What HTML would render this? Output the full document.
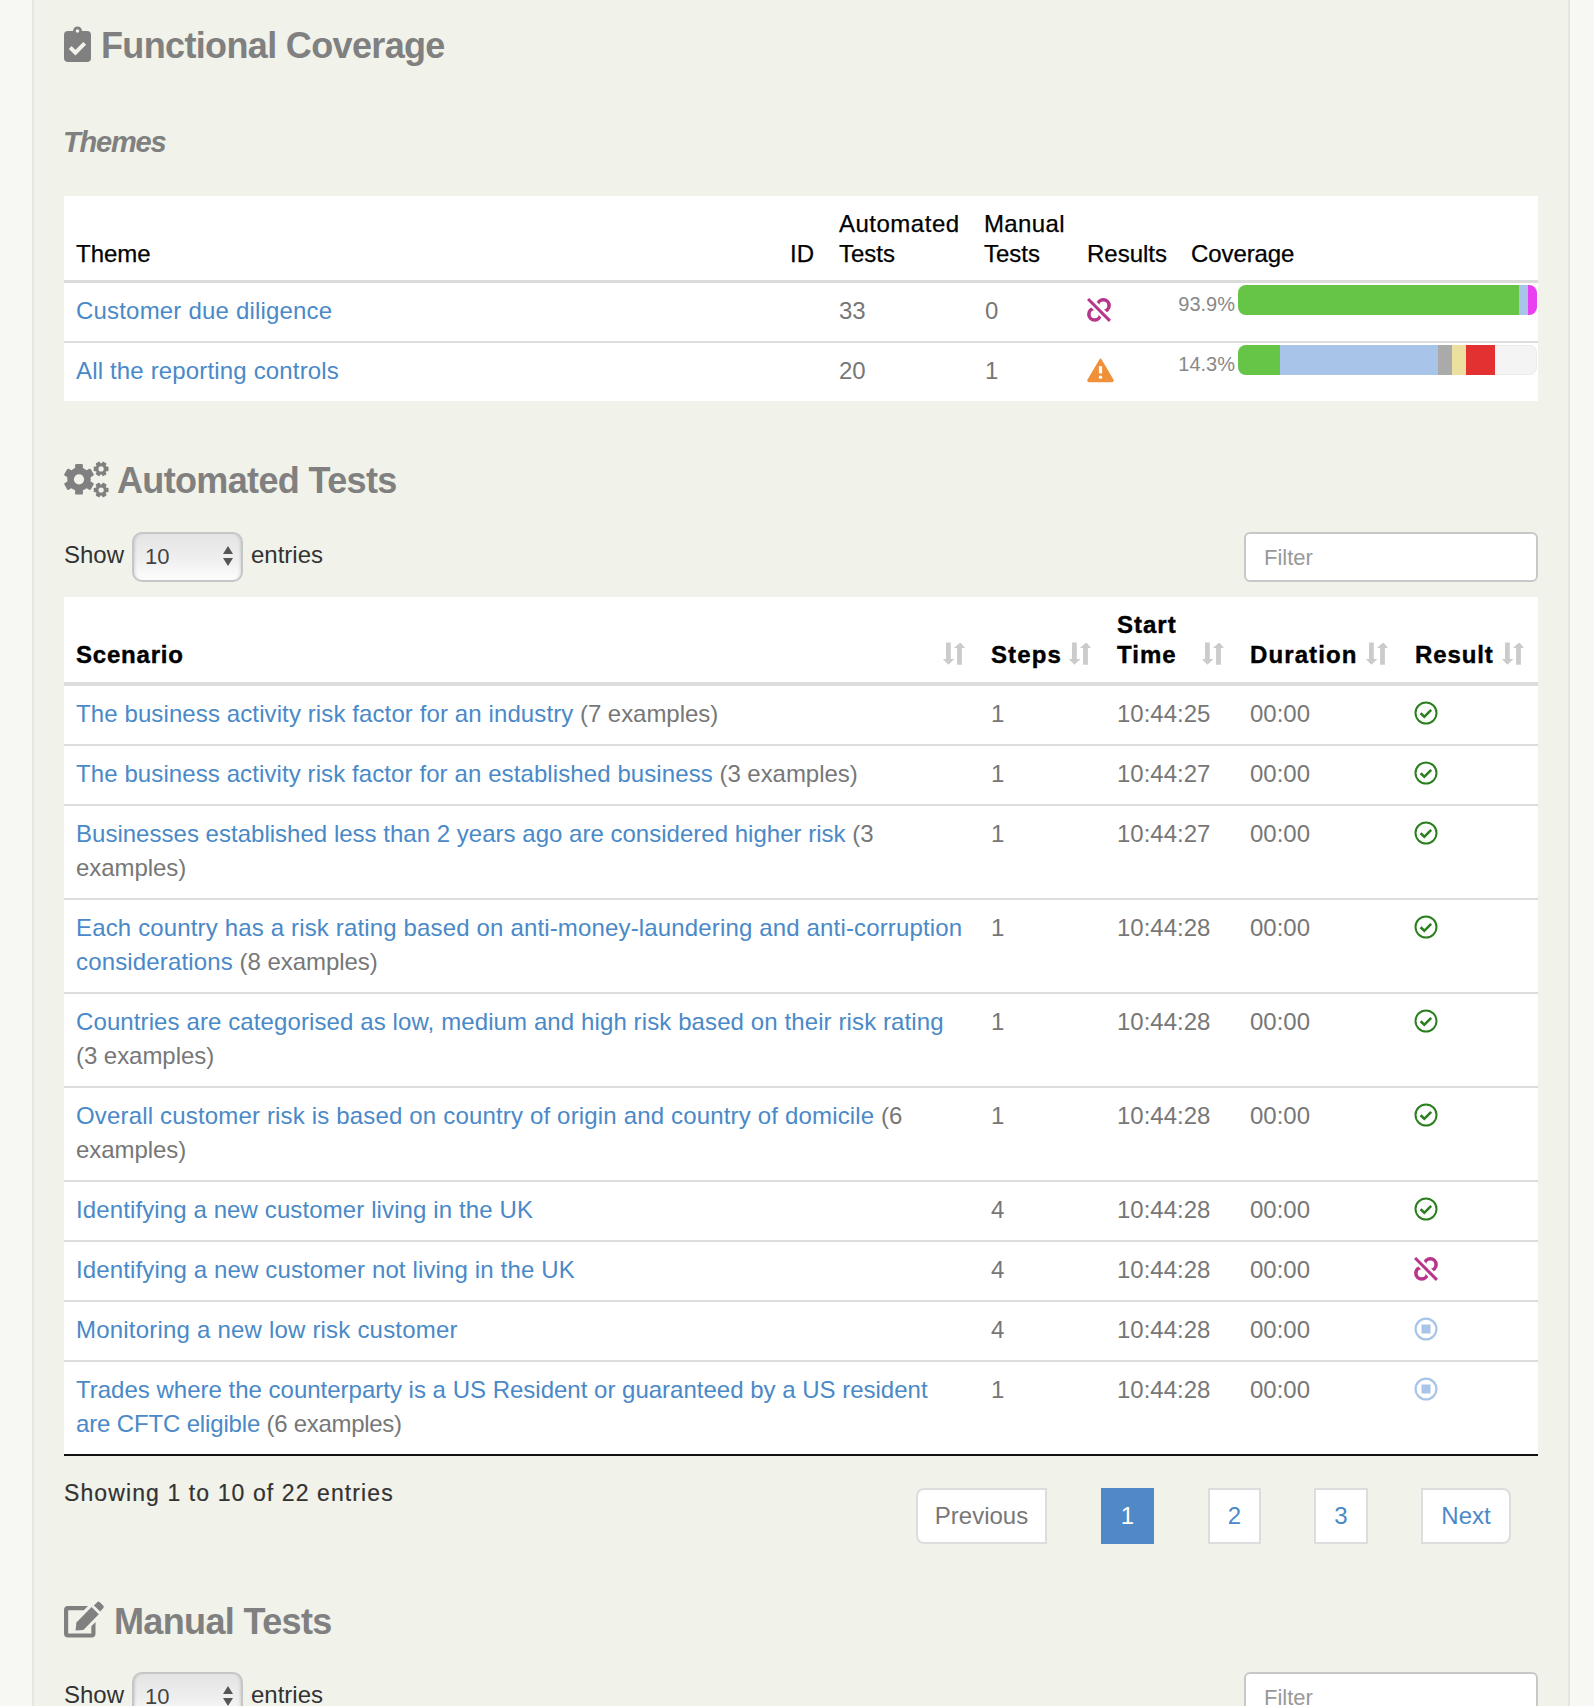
<!DOCTYPE html>
<html><head><meta charset="utf-8">
<style>
*{box-sizing:border-box;margin:0;padding:0}
html,body{width:1594px;height:1706px;overflow:hidden}
body{background:#f7f8f3;font-family:"Liberation Sans",sans-serif;position:relative}
#page{position:absolute;left:32px;top:0;width:1538px;height:1706px;background:#f1f2ea;border-left:2px solid #e5e6e1;border-right:2px solid #e5e6e1}
.abs{position:absolute;white-space:nowrap}
.h2{font-size:36px;font-weight:bold;color:#808080;letter-spacing:-0.65px;line-height:41px}
.themes{font-size:29px;font-weight:bold;font-style:italic;color:#808080;letter-spacing:-1.2px;line-height:32px}
.panel{position:absolute;left:64px;width:1474px;background:#fff}
.th1{font-size:24px;color:#000;line-height:30px;-webkit-text-stroke:0.25px #000}
.td{font-size:24px;line-height:34px;color:#777;letter-spacing:0.12px}
.ex{letter-spacing:-0.05px}
.num{letter-spacing:0}
a{color:#4a89c7;text-decoration:none}
.sep{position:absolute;left:64px;width:1474px;height:2px;background:#ddd}
.th2{font-size:24px;font-weight:bold;color:#000;line-height:30px;letter-spacing:1px;-webkit-text-stroke:0.4px #000}
.show{font-size:24px;color:#333;line-height:27px}
.sel{position:absolute;width:111px;height:50px;border:2px solid #c6c6c6;border-radius:10px;background:linear-gradient(#e4e4e4,#efefef 55%,#fdfdfd);box-shadow:inset 3px 0 3px -2px rgba(0,0,0,0.12),inset -3px 0 3px -2px rgba(0,0,0,0.12)}
.filter{position:absolute;left:1244px;width:294px;height:50px;border:2px solid #c8c8c8;border-radius:6px;background:#fff}
.pg{position:absolute;top:1488px;height:56px;border:2px solid #ddd;background:#fff;font-size:24px;color:#4a89c7;text-align:center;line-height:52px}
</style></head><body>
<div id="page"></div>
<svg class="abs" style="left:60px;top:24px" width="36" height="42" viewBox="0 0 36 42">
<path d="M8,7 H13 A4.5,4.5 0 0 1 22,7 H27 A4,4 0 0 1 31,11 V34 A4,4 0 0 1 27,38 H8 A4,4 0 0 1 4,34 V11 A4,4 0 0 1 8,7 Z" fill="#808080"/>
<circle cx="17.5" cy="7" r="1.8" fill="#f1f2ea"/>
<polyline points="10.2,23.5 15.4,28.6 24.7,19.4" fill="none" stroke="#f1f2ea" stroke-width="4"/>
</svg>
<div class="abs h2" style="left:101px;top:25px">Functional Coverage</div>
<div class="abs themes" style="left:63px;top:126px">Themes</div>
<div class="panel" style="top:196px;height:205px"></div>
<div class="abs th1" style="left:76px;top:239px;letter-spacing:0px">Theme</div>
<div class="abs th1" style="left:790px;top:239px;letter-spacing:0px">ID</div>
<div class="abs th1" style="left:839px;top:209px;letter-spacing:0.5px">Automated</div>
<div class="abs th1" style="left:839px;top:239px;letter-spacing:0px">Tests</div>
<div class="abs th1" style="left:984px;top:209px;letter-spacing:0.35px">Manual</div>
<div class="abs th1" style="left:984px;top:239px;letter-spacing:0px">Tests</div>
<div class="abs th1" style="left:1087px;top:239px;letter-spacing:0px">Results</div>
<div class="abs th1" style="left:1191px;top:239px;letter-spacing:-0.1px">Coverage</div>
<div class="sep" style="top:280px;height:3px;background:#dbdbdb"></div>
<div class="sep" style="top:341px"></div>
<div class="abs td" style="left:76px;top:294px"><a style="letter-spacing:0.19px">Customer due diligence</a></div>
<div class="abs td num" style="left:839px;top:294px">33</div>
<div class="abs td num" style="left:985px;top:294px">0</div>
<div class="abs td" style="left:76px;top:354px"><a style="letter-spacing:0.16px">All the reporting controls</a></div>
<div class="abs td num" style="left:839px;top:354px">20</div>
<div class="abs td num" style="left:985px;top:354px">1</div>
<svg class="abs" style="left:1087px;top:298px" width="24" height="24" viewBox="0 0 24 24">
<defs><clipPath id="bt1"><polygon points="-22.84,-29.56 33.02,27.71 61.66,-0.21 5.80,-57.49"/></clipPath><clipPath id="bb1"><polygon points="-28.42,-24.11 27.44,33.16 -1.20,61.09 -57.06,3.81"/></clipPath></defs>
<path d="M1.1,1.0 L22.9,22.9" stroke="#b8358c" stroke-width="3.0" fill="none"/>
<circle cx="16.3" cy="7.6" r="5.8" stroke="#b8358c" stroke-width="3.6" fill="none" clip-path="url(#bt1)"/>
<circle cx="7.66" cy="16.24" r="5.8" stroke="#b8358c" stroke-width="3.6" fill="none" clip-path="url(#bb1)"/></svg>
<svg class="abs" style="left:1086px;top:357px" width="29" height="26" viewBox="0 0 29 26">
<path d="M14.5,2.6 L26.6,23 Q27.1,24.2 25.8,24.2 L3.2,24.2 Q1.9,24.2 2.4,23 Z" fill="#f0913a" stroke="#f0913a" stroke-width="2" stroke-linejoin="round"/>
<rect x="12.9" y="9.2" width="3.2" height="7.2" fill="#fff"/>
<circle cx="14.5" cy="20.3" r="1.7" fill="#fff"/></svg>
<div class="abs" style="left:1169px;top:293px;width:66px;text-align:right;font-size:20px;line-height:22px;color:#888">93.9%</div>
<div class="abs" style="left:1169px;top:353px;width:66px;text-align:right;font-size:20px;line-height:22px;color:#888">14.3%</div>
<div class="abs" style="left:1238px;top:285px;width:299px;height:30px;border-radius:8px;overflow:hidden;display:flex">
<div style="width:281px;background:#66c547"></div><div style="width:9px;background:#a8c4e8"></div><div style="width:9px;background:#e840f0"></div></div>
<div class="abs" style="left:1238px;top:345px;width:299px;height:30px;border-radius:8px;overflow:hidden;display:flex;background:#f4f4f4;box-shadow:inset 0 0 0 1px #ececec">
<div style="width:42px;background:#66c547"></div><div style="width:158px;background:#a8c4e8"></div><div style="width:14px;background:#aaaaaa"></div><div style="width:14px;background:#ecdfa0"></div><div style="width:29px;background:#e33131"></div></div>
<svg class="abs" style="left:62px;top:459px" width="50" height="40" viewBox="0 0 50 40"><g fill="#808080"><g transform="translate(17,20.3)"><circle r="11.7"/><rect x="-3.9" y="-15.3" width="7.8" height="30.6" rx="1.2" transform="rotate(0)"/><rect x="-3.9" y="-15.3" width="7.8" height="30.6" rx="1.2" transform="rotate(60)"/><rect x="-3.9" y="-15.3" width="7.8" height="30.6" rx="1.2" transform="rotate(120)"/><circle r="5.1" fill="#f1f2ea"/></g><g transform="translate(39.1,9.9)"><circle r="5.6"/><rect x="-7.4" y="-2.3" width="14.8" height="4.6" rx="0.8" transform="rotate(0)"/><rect x="-7.4" y="-2.3" width="14.8" height="4.6" rx="0.8" transform="rotate(60)"/><rect x="-7.4" y="-2.3" width="14.8" height="4.6" rx="0.8" transform="rotate(120)"/><circle r="2.6" fill="#f1f2ea"/></g><g transform="translate(39.1,31)"><circle r="5.6"/><rect x="-7.4" y="-2.3" width="14.8" height="4.6" rx="0.8" transform="rotate(0)"/><rect x="-7.4" y="-2.3" width="14.8" height="4.6" rx="0.8" transform="rotate(60)"/><rect x="-7.4" y="-2.3" width="14.8" height="4.6" rx="0.8" transform="rotate(120)"/><circle r="2.6" fill="#f1f2ea"/></g></g></svg>
<div class="abs h2" style="left:117px;top:460px">Automated Tests</div>
<div class="abs show" style="left:64px;top:541px">Show</div>
<div class="sel" style="left:132px;top:532px"></div>
<div class="abs show" style="left:145px;top:544px;color:#444;font-size:22px;line-height:25px">10</div>
<svg class="abs" style="left:222px;top:546px" width="12" height="24" viewBox="0 0 12 24"><path d="M6,0 L11,8 L1,8 Z M1,12 L11,12 L6,20 Z" fill="#555"/></svg>
<div class="abs show" style="left:251px;top:541px">entries</div>
<div class="filter" style="top:532px"></div>
<div class="abs" style="left:1264px;top:545px;font-size:22px;line-height:25px;color:#999">Filter</div>
<div class="panel" style="top:597px;height:857px"></div>
<div class="abs" style="left:64px;top:1454px;width:1474px;height:2px;background:#111"></div>
<div class="abs" style="left:64px;top:682px;width:1474px;height:4px;background:#dcdcdc"></div>
<div class="abs th2" style="left:76px;top:640px;letter-spacing:0.8px">Scenario</div>
<div class="abs th2" style="left:991px;top:640px;letter-spacing:1.1px">Steps</div>
<div class="abs th2" style="left:1117px;top:610px;letter-spacing:1px">Start</div>
<div class="abs th2" style="left:1117px;top:640px;letter-spacing:1px">Time</div>
<div class="abs th2" style="left:1250px;top:640px;letter-spacing:1.1px">Duration</div>
<div class="abs th2" style="left:1415px;top:640px;letter-spacing:0.9px">Result</div>
<svg class="abs" style="left:942px;top:642px" width="24" height="24" viewBox="0 0 24 24"><path d="M4,0.5 H8.8 V17 H12.4 L6.4,22.8 L0.9,17 H4 Z M15.1,22.8 H19.9 V6 H23 L18.8,1 H17.6 L11.9,6 H15.1 Z" fill="#cbcbcb"/></svg>
<svg class="abs" style="left:1068px;top:642px" width="24" height="24" viewBox="0 0 24 24"><path d="M4,0.5 H8.8 V17 H12.4 L6.4,22.8 L0.9,17 H4 Z M15.1,22.8 H19.9 V6 H23 L18.8,1 H17.6 L11.9,6 H15.1 Z" fill="#cbcbcb"/></svg>
<svg class="abs" style="left:1201px;top:642px" width="24" height="24" viewBox="0 0 24 24"><path d="M4,0.5 H8.8 V17 H12.4 L6.4,22.8 L0.9,17 H4 Z M15.1,22.8 H19.9 V6 H23 L18.8,1 H17.6 L11.9,6 H15.1 Z" fill="#cbcbcb"/></svg>
<svg class="abs" style="left:1365px;top:642px" width="24" height="24" viewBox="0 0 24 24"><path d="M4,0.5 H8.8 V17 H12.4 L6.4,22.8 L0.9,17 H4 Z M15.1,22.8 H19.9 V6 H23 L18.8,1 H17.6 L11.9,6 H15.1 Z" fill="#cbcbcb"/></svg>
<svg class="abs" style="left:1501px;top:642px" width="24" height="24" viewBox="0 0 24 24"><path d="M4,0.5 H8.8 V17 H12.4 L6.4,22.8 L0.9,17 H4 Z M15.1,22.8 H19.9 V6 H23 L18.8,1 H17.6 L11.9,6 H15.1 Z" fill="#cbcbcb"/></svg>
<div class="abs td" style="left:76px;top:697px"><a style="letter-spacing:0.106px">The business activity risk factor for an industry</a><span class="ex"> (7 examples)</span></div>
<div class="abs td num" style="left:991px;top:697px">1</div>
<div class="abs td num" style="left:1117px;top:697px">10:44:25</div>
<div class="abs td num" style="left:1250px;top:697px">00:00</div>
<svg class="abs" style="left:1414px;top:701px" width="24" height="24" viewBox="0 0 24 24"><circle cx="12" cy="12" r="10.5" fill="none" stroke="#2b7f1f" stroke-width="2"/><polyline points="6.6,12.3 10.3,15.8 17.2,8.9" fill="none" stroke="#2b7f1f" stroke-width="2.6"/></svg>
<div class="sep" style="top:744px"></div>
<div class="abs td" style="left:76px;top:757px"><a style="letter-spacing:0.097px">The business activity risk factor for an established business</a><span class="ex"> (3 examples)</span></div>
<div class="abs td num" style="left:991px;top:757px">1</div>
<div class="abs td num" style="left:1117px;top:757px">10:44:27</div>
<div class="abs td num" style="left:1250px;top:757px">00:00</div>
<svg class="abs" style="left:1414px;top:761px" width="24" height="24" viewBox="0 0 24 24"><circle cx="12" cy="12" r="10.5" fill="none" stroke="#2b7f1f" stroke-width="2"/><polyline points="6.6,12.3 10.3,15.8 17.2,8.9" fill="none" stroke="#2b7f1f" stroke-width="2.6"/></svg>
<div class="sep" style="top:804px"></div>
<div class="abs td" style="left:76px;top:817px"><a style="letter-spacing:0.017px">Businesses established less than 2 years ago are considered higher risk</a><span class="ex"> (3<br>examples)</span></div>
<div class="abs td num" style="left:991px;top:817px">1</div>
<div class="abs td num" style="left:1117px;top:817px">10:44:27</div>
<div class="abs td num" style="left:1250px;top:817px">00:00</div>
<svg class="abs" style="left:1414px;top:821px" width="24" height="24" viewBox="0 0 24 24"><circle cx="12" cy="12" r="10.5" fill="none" stroke="#2b7f1f" stroke-width="2"/><polyline points="6.6,12.3 10.3,15.8 17.2,8.9" fill="none" stroke="#2b7f1f" stroke-width="2.6"/></svg>
<div class="sep" style="top:898px"></div>
<div class="abs td" style="left:76px;top:911px"><a style="letter-spacing:0.154px">Each country has a risk rating based on anti-money-laundering and anti-corruption<br>considerations</a><span class="ex"> (8 examples)</span></div>
<div class="abs td num" style="left:991px;top:911px">1</div>
<div class="abs td num" style="left:1117px;top:911px">10:44:28</div>
<div class="abs td num" style="left:1250px;top:911px">00:00</div>
<svg class="abs" style="left:1414px;top:915px" width="24" height="24" viewBox="0 0 24 24"><circle cx="12" cy="12" r="10.5" fill="none" stroke="#2b7f1f" stroke-width="2"/><polyline points="6.6,12.3 10.3,15.8 17.2,8.9" fill="none" stroke="#2b7f1f" stroke-width="2.6"/></svg>
<div class="sep" style="top:992px"></div>
<div class="abs td" style="left:76px;top:1005px"><a style="letter-spacing:0.106px">Countries are categorised as low, medium and high risk based on their risk rating</a><span class="ex"><br>(3 examples)</span></div>
<div class="abs td num" style="left:991px;top:1005px">1</div>
<div class="abs td num" style="left:1117px;top:1005px">10:44:28</div>
<div class="abs td num" style="left:1250px;top:1005px">00:00</div>
<svg class="abs" style="left:1414px;top:1009px" width="24" height="24" viewBox="0 0 24 24"><circle cx="12" cy="12" r="10.5" fill="none" stroke="#2b7f1f" stroke-width="2"/><polyline points="6.6,12.3 10.3,15.8 17.2,8.9" fill="none" stroke="#2b7f1f" stroke-width="2.6"/></svg>
<div class="sep" style="top:1086px"></div>
<div class="abs td" style="left:76px;top:1099px"><a style="letter-spacing:0.169px">Overall customer risk is based on country of origin and country of domicile</a><span class="ex"> (6<br>examples)</span></div>
<div class="abs td num" style="left:991px;top:1099px">1</div>
<div class="abs td num" style="left:1117px;top:1099px">10:44:28</div>
<div class="abs td num" style="left:1250px;top:1099px">00:00</div>
<svg class="abs" style="left:1414px;top:1103px" width="24" height="24" viewBox="0 0 24 24"><circle cx="12" cy="12" r="10.5" fill="none" stroke="#2b7f1f" stroke-width="2"/><polyline points="6.6,12.3 10.3,15.8 17.2,8.9" fill="none" stroke="#2b7f1f" stroke-width="2.6"/></svg>
<div class="sep" style="top:1180px"></div>
<div class="abs td" style="left:76px;top:1193px"><a style="letter-spacing:0.112px">Identifying a new customer living in the UK</a><span class="ex"></span></div>
<div class="abs td num" style="left:991px;top:1193px">4</div>
<div class="abs td num" style="left:1117px;top:1193px">10:44:28</div>
<div class="abs td num" style="left:1250px;top:1193px">00:00</div>
<svg class="abs" style="left:1414px;top:1197px" width="24" height="24" viewBox="0 0 24 24"><circle cx="12" cy="12" r="10.5" fill="none" stroke="#2b7f1f" stroke-width="2"/><polyline points="6.6,12.3 10.3,15.8 17.2,8.9" fill="none" stroke="#2b7f1f" stroke-width="2.6"/></svg>
<div class="sep" style="top:1240px"></div>
<div class="abs td" style="left:76px;top:1253px"><a style="letter-spacing:0.139px">Identifying a new customer not living in the UK</a><span class="ex"></span></div>
<div class="abs td num" style="left:991px;top:1253px">4</div>
<div class="abs td num" style="left:1117px;top:1253px">10:44:28</div>
<div class="abs td num" style="left:1250px;top:1253px">00:00</div>
<svg class="abs" style="left:1414px;top:1257px" width="24" height="24" viewBox="0 0 24 24">
<defs><clipPath id="bt2"><polygon points="-22.84,-29.56 33.02,27.71 61.66,-0.21 5.80,-57.49"/></clipPath><clipPath id="bb2"><polygon points="-28.42,-24.11 27.44,33.16 -1.20,61.09 -57.06,3.81"/></clipPath></defs>
<path d="M1.1,1.0 L22.9,22.9" stroke="#b8358c" stroke-width="3.0" fill="none"/>
<circle cx="16.3" cy="7.6" r="5.8" stroke="#b8358c" stroke-width="3.6" fill="none" clip-path="url(#bt2)"/>
<circle cx="7.66" cy="16.24" r="5.8" stroke="#b8358c" stroke-width="3.6" fill="none" clip-path="url(#bb2)"/></svg>
<div class="sep" style="top:1300px"></div>
<div class="abs td" style="left:76px;top:1313px"><a style="letter-spacing:0.203px">Monitoring a new low risk customer</a><span class="ex"></span></div>
<div class="abs td num" style="left:991px;top:1313px">4</div>
<div class="abs td num" style="left:1117px;top:1313px">10:44:28</div>
<div class="abs td num" style="left:1250px;top:1313px">00:00</div>
<svg class="abs" style="left:1414px;top:1317px" width="24" height="24" viewBox="0 0 24 24"><circle cx="12" cy="12" r="10.4" fill="none" stroke="#a8c4e8" stroke-width="2.2"/><rect x="7.5" y="7.5" width="9" height="9" fill="#a8c4e8"/></svg>
<div class="sep" style="top:1360px"></div>
<div class="abs td" style="left:76px;top:1373px"><a style="letter-spacing:0.0px">Trades where the counterparty is a US Resident or guaranteed by a US resident<br><span style="letter-spacing:-0.15px">are CFTC eligible</span></a><span class="ex"><span style="letter-spacing:-0.3px"> (6 examples)</span></span></div>
<div class="abs td num" style="left:991px;top:1373px">1</div>
<div class="abs td num" style="left:1117px;top:1373px">10:44:28</div>
<div class="abs td num" style="left:1250px;top:1373px">00:00</div>
<svg class="abs" style="left:1414px;top:1377px" width="24" height="24" viewBox="0 0 24 24"><circle cx="12" cy="12" r="10.4" fill="none" stroke="#a8c4e8" stroke-width="2.2"/><rect x="7.5" y="7.5" width="9" height="9" fill="#a8c4e8"/></svg>
<div class="abs" style="left:64px;top:1480px;font-size:23px;line-height:26px;color:#333;letter-spacing:1.1px;-webkit-text-stroke:0.2px #333">Showing 1 to 10 of 22 entries</div>
<div class="pg" style="left:916px;width:131px;border-radius:8px 0 0 8px;color:#777">Previous</div>
<div class="pg" style="left:1101px;width:53px;background:#5089c6;border-color:#5089c6;color:#fff">1</div>
<div class="pg" style="left:1208px;width:53px">2</div>
<div class="pg" style="left:1314px;width:54px">3</div>
<div class="pg" style="left:1421px;width:90px;border-radius:0 8px 8px 0">Next</div>
<svg class="abs" style="left:58px;top:1596px" width="52" height="46" viewBox="0 0 52 46">
<path d="M30,10 H10 A4,4 0 0 0 6,14 V37.6 A4,4 0 0 0 10,41.6 H33.5 A4,4 0 0 0 37.5,37.6 V26 L33.3,30.2 V37.4 H10.2 V14.2 H25.8 Z" fill="#808080"/>
<path d="M33.6,11.1 L40.8,18.3 L25.4,33.9 L17.6,34.6 L18.4,26.4 Z" fill="#808080"/>
<path d="M35.9,9.5 L39.2,6.2 Q40.5,4.9 41.8,6.2 L45.2,9.6 Q46.5,10.9 45.2,12.2 L42.2,15.5 Z" fill="#808080"/>
</svg>
<div class="abs h2" style="left:114px;top:1601px">Manual Tests</div>
<div class="abs show" style="left:64px;top:1681px">Show</div>
<div class="sel" style="left:132px;top:1672px"></div>
<div class="abs show" style="left:145px;top:1684px;color:#444;font-size:22px;line-height:25px">10</div>
<svg class="abs" style="left:222px;top:1686px" width="12" height="24" viewBox="0 0 12 24"><path d="M6,0 L11,8 L1,8 Z M1,12 L11,12 L6,20 Z" fill="#555"/></svg>
<div class="abs show" style="left:251px;top:1681px">entries</div>
<div class="filter" style="top:1672px"></div>
<div class="abs" style="left:1264px;top:1685px;font-size:22px;line-height:25px;color:#999">Filter</div>
</body></html>
